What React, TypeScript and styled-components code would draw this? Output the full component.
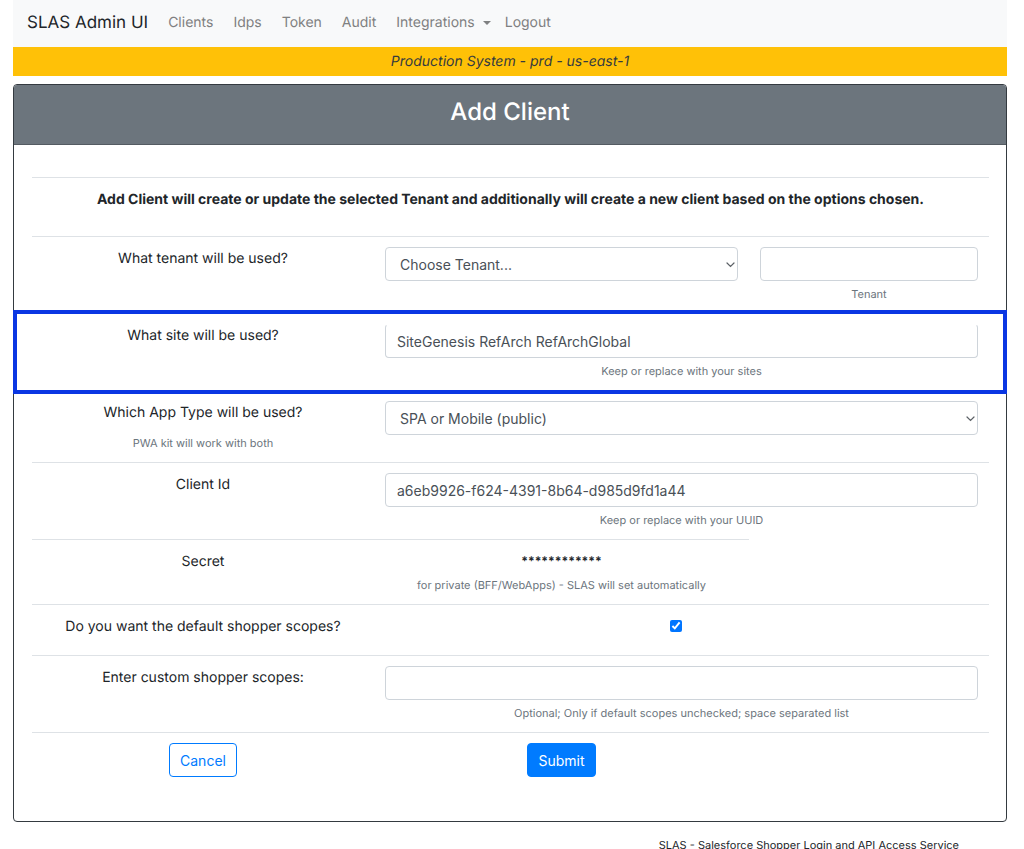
import React from 'react';
import styled, { createGlobalStyle, css } from 'styled-components';

const GlobalStyle = createGlobalStyle`
  *, *::before, *::after { box-sizing: border-box; }
  body {
    margin: 0;
    background: #fff;
    color: #212529;
    font-family: Inter, "Liberation Sans", sans-serif;
    font-size: 14px;
    line-height: 24px;
    text-rendering: geometricPrecision;
    overflow-x: hidden;
  }
`;

const Page = styled.div`
  padding: 0 17px 0 13px;
`;

const Navbar = styled.nav`
  display: flex;
  align-items: center;
  height: 47px;
  padding: 0 14px 2px;
  background: #f8f9fa;
`;

const Brand = styled.a`
  margin-right: 20px;
  color: #212529;
  font-size: 17px;
  text-decoration: none;
`;

const NavList = styled.ul`
  display: flex;
  gap: 20px;
  margin: 0;
  padding: 0;
  list-style: none;
`;

const NavItem = styled.li<{ $tight?: boolean }>`
  margin-right: ${(p) => (p.$tight ? '-6px' : '0')};
`;

const NavLink = styled.a`
  display: flex;
  align-items: center;
  gap: 8px;
  color: #7f8081;
  text-decoration: none;
`;

const Caret = styled.span`
  border: 4px solid transparent;
  border-top-color: currentColor;
  border-bottom: 0;
`;

const Banner = styled.div`
  height: 29px;
  line-height: 30px;
  background: #ffc107;
  color: #343a40;
  font-style: italic;
  text-align: center;
`;

const Card = styled.main`
  margin-top: 8px;
  border: 1px solid #343a40;
  border-radius: 4px;
`;

const CardHeader = styled.header`
  padding: 10px 18px 16px;
  border-bottom: 1px solid #545b62;
  border-radius: 3px 3px 0 0;
  background: #6c757d;
`;

const Title = styled.h1`
  margin: 0;
  color: #fff;
  font-size: 24px;
  font-weight: 500;
  line-height: 33px;
  text-align: center;
`;

const Form = styled.form`
  padding: 32px 17px 34px 18px;
`;

const Row = styled.div<{ $highlighted?: boolean; $height?: number }>`
  display: grid;
  grid-template-columns: 342fr 375fr 240fr;
  min-height: ${(p) => (p.$height ? `${p.$height}px` : 'auto')};
  ${(p) =>
    p.$highlighted &&
    css`
      position: relative;
      &::after {
        content: '';
        position: absolute;
        inset: -3px -18px -4px -19px;
        border: 4px solid #0a36e3;
        pointer-events: none;
      }
    `}
`;

const Cell = styled.div<{ $span?: number }>`
  grid-column: span ${(p) => p.$span ?? 1};
  min-width: 0;
  padding: 10px 11px;
  border-top: 1px solid #dee2e6;
  text-align: center;
`;

const Label = styled.label`
  display: block;
`;

const Mask = styled.strong`
  display: block;
  font-size: 12px;
  line-height: 22px;
`;

const Help = styled.small<{ $below?: 'label' }>`
  display: block;
  margin-top: ${(p) => (p.$below === 'label' ? '9px' : '4px')};
  color: #6c757d;
  font-size: 11px;
  line-height: 18px;
`;

const field = css`
  display: block;
  width: 100%;
  height: 34px;
  border: 1px solid #ced4da;
  border-radius: 4px;
  background: #fff;
  color: #495057;
  font: inherit;
`;

const TextInput = styled.input<{ $openTop?: boolean }>`
  ${field}
  padding: 0 11px;
  ${(p) => p.$openTop && 'border-top-color: transparent;'}
`;

const SelectWrap = styled.div`
  position: relative;
`;

const SelectBox = styled.select`
  ${field}
  appearance: none;
  padding: 1px 22px 0 14px;
`;

const Chevron = styled.svg`
  position: absolute;
  top: 15px;
  right: 3px;
  pointer-events: none;
`;

const Checkbox = styled.input`
  width: 12px;
  height: 12px;
  margin: 5px 11px 0 0;
  vertical-align: top;
`;

const Button = styled.button<{ $primary?: boolean }>`
  height: 34px;
  padding: 1px 10px 0;
  border: 1px solid #007bff;
  border-radius: 4px;
  background: ${(p) => (p.$primary ? '#007bff' : '#fff')};
  color: ${(p) => (p.$primary ? '#fff' : '#007bff')};
  font: inherit;
  vertical-align: top;
`;

const Footer = styled.footer`
  padding: 14px 48px 0 0;
  font-size: 11px;
  line-height: 18px;
  text-align: right;
`;

function Select({ id, value }: { id: string; value: string }) {
  return (
    <SelectWrap>
      <SelectBox id={id} defaultValue={value}>
        <option>{value}</option>
      </SelectBox>
      <Chevron width="9" height="6" viewBox="0 0 9 6" fill="none" aria-hidden="true">
        <path d="M1 1l3.5 3.5L8 1" stroke="#5c6166" strokeWidth="1.2" strokeLinecap="round" />
      </Chevron>
    </SelectWrap>
  );
}

const links = ['Clients', 'Idps', 'Token', 'Audit', 'Integrations', 'Logout'];

export default function App() {
  return (
    <>
      <GlobalStyle />
      <Page>
        <Navbar>
          <Brand href="#">SLAS Admin UI</Brand>
          <NavList>
            {links.map((name) => (
              <NavItem key={name} $tight={name === 'Integrations'}>
                <NavLink href="#">
                  {name}
                  {name === 'Integrations' && <Caret />}
                </NavLink>
              </NavItem>
            ))}
          </NavList>
        </Navbar>
        <Banner>Production System - prd - us-east-1</Banner>
        <Card>
          <CardHeader>
            <Title>Add Client</Title>
          </CardHeader>
          <Form onSubmit={(e) => e.preventDefault()}>
            <Row $height={59}>
              <Cell $span={3}>
                <strong>
                  Add Client will create or update the selected Tenant and additionally will create a new client
                  based on the options chosen.
                </strong>
              </Cell>
            </Row>
            <Row>
              <Cell>
                <Label htmlFor="tenant-choice">What tenant will be used?</Label>
              </Cell>
              <Cell>
                <Select id="tenant-choice" value="Choose Tenant..." />
              </Cell>
              <Cell>
                <TextInput id="tenant" aria-labelledby="tenant-help" />
                <Help id="tenant-help">Tenant</Help>
              </Cell>
            </Row>
            <Row $highlighted>
              <Cell>
                <Label htmlFor="site">What site will be used?</Label>
              </Cell>
              <Cell $span={2}>
                <TextInput id="site" $openTop defaultValue="SiteGenesis RefArch RefArchGlobal" />
                <Help>Keep or replace with your sites</Help>
              </Cell>
            </Row>
            <Row>
              <Cell>
                <Label htmlFor="app-type">Which App Type will be used?</Label>
                <Help $below="label">PWA kit will work with both</Help>
              </Cell>
              <Cell $span={2}>
                <Select id="app-type" value="SPA or Mobile (public)" />
              </Cell>
            </Row>
            <Row>
              <Cell>
                <Label htmlFor="client-id">Client Id</Label>
              </Cell>
              <Cell $span={2}>
                <TextInput id="client-id" defaultValue="a6eb9926-f624-4391-8b64-d985d9fd1a44" />
                <Help>Keep or replace with your UUID</Help>
              </Cell>
            </Row>
            <Row>
              <Cell>Secret</Cell>
              <Cell>
                <Mask>************</Mask>
                <Help>for private (BFF/WebApps) - SLAS will set automatically</Help>
              </Cell>
            </Row>
            <Row $height={51}>
              <Cell>
                <Label htmlFor="default-scopes">Do you want the default shopper scopes?</Label>
              </Cell>
              <Cell $span={2}>
                <Checkbox id="default-scopes" type="checkbox" defaultChecked />
              </Cell>
            </Row>
            <Row>
              <Cell>
                <Label htmlFor="custom-scopes">Enter custom shopper scopes:</Label>
              </Cell>
              <Cell $span={2}>
                <TextInput id="custom-scopes" />
                <Help>Optional; Only if default scopes unchecked; space separated list</Help>
              </Cell>
            </Row>
            <Row>
              <Cell>
                <Button type="button">Cancel</Button>
              </Cell>
              <Cell>
                <Button type="submit" $primary>
                  Submit
                </Button>
              </Cell>
              <Cell />
            </Row>
          </Form>
        </Card>
        <Footer>SLAS - Salesforce Shopper Login and API Access Service</Footer>
      </Page>
    </>
  );
}
